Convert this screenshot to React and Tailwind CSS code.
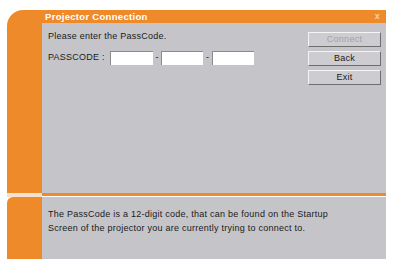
export default function App() {
  const orange = "bg-[#ef8a2b]";

  return (
    <div className="w-[393px] h-[262px] bg-white pt-[10px] pl-[7px] font-['Liberation_Sans',sans-serif] text-[9px] tracking-[0.25px] text-[#1a1a1a]">
      <div className="w-[379px] flex flex-col">
        {/* TOP PANEL */}
        <div className={`${orange} rounded-tl-[16px] pl-[35px] h-[183px] flex flex-col`}>
          <div className="h-[13px] flex items-center justify-between pl-[3px] pr-[6px]">
            <span className="text-white font-bold text-[9.5px] leading-none tracking-[0.3px]">Projector Connection</span>
            <span className="text-[#f7d3a8] font-bold text-[9px] leading-none">x</span>
          </div>
          <div className="flex-1 bg-[#c5c5c9] flex pl-[6px] pr-[5px] pt-[8px]">
            <div className="flex-1">
              <p className="leading-[10px]">Please enter the PassCode.</p>
              <div className="flex items-center mt-[10px]">
                <span className="w-[62px]">PASSCODE :</span>
                <div className="w-[43px] h-[14px] bg-white border-t border-l border-[#8a8a8a]" />
                <span className="w-[8px] text-center">-</span>
                <div className="w-[42px] h-[14px] bg-white border-t border-l border-[#8a8a8a]" />
                <span className="w-[9px] text-center">-</span>
                <div className="w-[42px] h-[14px] bg-white border-t border-l border-[#8a8a8a]" />
              </div>
            </div>
            <div className="flex flex-col gap-[4px] w-[73px] mt-[1px]">
              {["Connect", "Back", "Exit"].map((label, i) => (
                <div
                  key={label}
                  className={`h-[15px] flex items-center justify-center bg-[#cdcdd1] border border-t-[#f4f4f4] border-l-[#f4f4f4] border-r-[#6e6e6e] border-b-[#6e6e6e] ${
                    i === 0 ? "text-[#a2a2a6]" : "text-[#1a1a1a]"
                  }`}
                >
                  {label}
                </div>
              ))}
            </div>
          </div>
        </div>

        {/* SEPARATOR */}
        <div className="flex h-[4px]">
          <div className="w-[35px] bg-[#f3e2d0]" />
          <div className={`flex-1 ${orange} h-[3px]`} />
        </div>

        {/* BOTTOM PANEL */}
        <div className="flex h-[62px]">
          <div className={`w-[35px] ${orange} rounded-tl-[6px]`} />
          <div className="flex-1 bg-[#c5c5c9] pl-[6px] pt-[10px] leading-[14px]">
            <p>The PassCode is a 12-digit code, that can be found on the Startup</p>
            <p>Screen of the projector you are currently trying to connect to.</p>
          </div>
        </div>
      </div>
    </div>
  );
}
